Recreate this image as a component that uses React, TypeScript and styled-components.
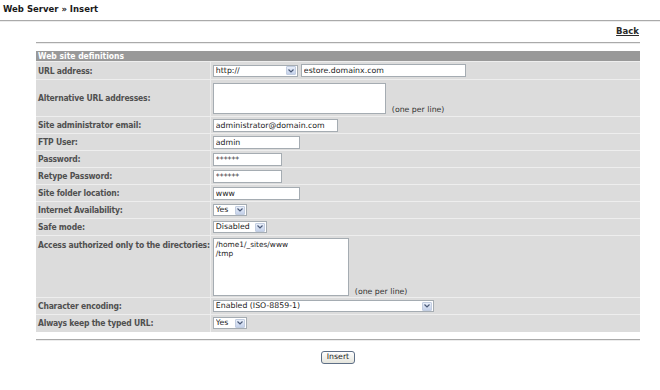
import React from 'react';
import styled, { createGlobalStyle } from 'styled-components';

const GlobalStyle = createGlobalStyle`
  body {
    margin: 0;
    background: #ffffff;
    font-family: "DejaVu Sans", Verdana, sans-serif;
    color: #222;
  }
`;

const Title = styled.h1`
  margin: 0;
  padding: 4px 0 0 3px;
  font-size: 8.5px;
  line-height: 10px;
  font-weight: bold;
  color: #1a1a1a;
`;

const Rule = styled.hr<{ $top: number }>`
  margin: ${(p) => p.$top}px 0 0 0;
  height: 0;
  border: 0;
  border-top: 1px solid #aaaaaa;
  border-bottom: 1px solid #ececec;
`;

const Content = styled.div`
  padding: 0 20px 0 36px;
`;

const BackRow = styled.div`
  margin-top: 2px;
  text-align: right;
  line-height: 10px;
  padding-right: 1px;
`;

const BackLink = styled.a`
  font-size: 8.5px;
  font-weight: bold;
  color: #2a2a2a;
  text-decoration: underline;
`;

const FormTable = styled.table`
  width: 100%;
  margin-top: 7px;
  border-collapse: collapse;
  font-family: "DejaVu Sans Condensed", "DejaVu Sans", sans-serif;
  font-stretch: condensed;
  font-size: 8.5px;
`;

const HeadCell = styled.th`
  height: 10px;
  padding: 0 0 0 2px;
  background: #999999;
  color: #ffffff;
  font-weight: bold;
  text-align: left;
  line-height: 10px;
`;

const Row = styled.tr`
  border-top: 1px solid #eeeeee;
  background: #dcdcdc;
`;

const LabelCell = styled.td<{ $h: number; $top?: boolean }>`
  width: 172px;
  height: ${(p) => p.$h}px;
  padding: ${(p) => (p.$top ? '4px 0 0 2px' : '0 0 0 2px')};
  vertical-align: ${(p) => (p.$top ? 'top' : 'middle')};
  font-weight: bold;
  color: #505050;
  letter-spacing: -0.2px;
  white-space: nowrap;
  box-sizing: border-box;
`;

const ValueCell = styled.td`
  border-left: 1px solid #eeeeee;
  padding: 0 0 0 2px;
  vertical-align: middle;
`;

const Line = styled.div<{ $pad?: string }>`
  display: flex;
  align-items: flex-end;
  gap: 6px;
  padding: ${(p) => p.$pad || '0'};
`;

const Field = styled.input<{ $w: number }>`
  width: ${(p) => p.$w}px;
  height: 13px;
  box-sizing: border-box;
  border: 1px solid #a5acb2;
  background: #ffffff;
  padding: 0 2px;
  font-family: "DejaVu Sans", Verdana, sans-serif;
  font-size: 7.8px;
  color: #222;
  outline: none;
  display: block;
`;

const Area = styled.textarea<{ $w: number; $h: number }>`
  width: ${(p) => p.$w}px;
  height: ${(p) => p.$h}px;
  box-sizing: border-box;
  border: 1px solid #a5acb2;
  background: #ffffff;
  padding: 1px 2px;
  margin: 0;
  resize: none;
  font-family: "DejaVu Sans", Verdana, sans-serif;
  font-size: 7.4px;
  line-height: 9px;
  color: #222;
  outline: none;
  display: block;
`;

const Hint = styled.span`
  font-family: "DejaVu Sans", Verdana, sans-serif;
  font-stretch: normal;
  font-size: 7.8px;
  color: #333;
  line-height: 9px;
`;

const SelectBox = styled.span<{ $w: number }>`
  display: flex;
  align-items: center;
  width: ${(p) => p.$w}px;
  height: 12px;
  box-sizing: border-box;
  border: 1px solid #a5acb2;
  background: #ffffff;
`;

const NativeSelect = styled.select`
  appearance: none;
  flex: 1;
  min-width: 0;
  height: 100%;
  border: 0;
  background: transparent;
  padding: 0 0 0 2px;
  font-family: "DejaVu Sans", Verdana, sans-serif;
  font-size: 7.8px;
  line-height: 10px;
  color: #222;
  outline: none;
`;

const ArrowButton = styled.span`
  width: 10px;
  height: 9px;
  margin-right: 1px;
  box-sizing: border-box;
  border: 1px solid #c2cde0;
  border-radius: 1px;
  background: linear-gradient(#e8eef9, #c4d1ea);
  display: flex;
  align-items: center;
  justify-content: center;
`;

const Inline = styled.div`
  display: flex;
  align-items: center;
  gap: 3px;
`;

const Footer = styled.div`
  display: flex;
  justify-content: center;
  padding-top: 10px;
`;

const SubmitButton = styled.button`
  width: 34px;
  height: 13px;
  padding: 0;
  border: 1px solid #5e6f86;
  border-radius: 3px;
  background: linear-gradient(#ffffff, #e4e4dc);
  font-family: "DejaVu Sans", Verdana, sans-serif;
  font-size: 7.8px;
  line-height: 10px;
  color: #222;
`;

const Chevron = () => (
  <svg width="6" height="4" viewBox="0 0 6 4">
    <path d="M0.5 0.5 L3 3 L5.5 0.5" fill="none" stroke="#4b5a78" strokeWidth="1.2" />
  </svg>
);

const Select = ({ w, options }: { w: number; options: string[] }) => (
  <SelectBox $w={w}>
    <NativeSelect defaultValue={options[0]}>
      {options.map((o) => (
        <option key={o}>{o}</option>
      ))}
    </NativeSelect>
    <ArrowButton>
      <Chevron />
    </ArrowButton>
  </SelectBox>
);

const App = () => {
  return (
    <>
      <GlobalStyle />
      <Title>Web Server » Insert</Title>
      <Rule $top={6} />
      <Content>
        <BackRow>
          <BackLink href="#">Back</BackLink>
        </BackRow>
        <Rule $top={6} />
        <FormTable>
          <tbody>
            <tr>
              <HeadCell colSpan={2}>Web site definitions</HeadCell>
            </tr>
            <Row>
              <LabelCell $h={18}>URL address:</LabelCell>
              <ValueCell>
                <Inline>
                  <Select w={85} options={['http://', 'https://']} />
                  <Field $w={165} defaultValue="estore.domainx.com" />
                </Inline>
              </ValueCell>
            </Row>
            <Row>
              <LabelCell $h={37}>Alternative URL addresses:</LabelCell>
              <ValueCell>
                <Line $pad="3px 0 2px 0">
                  <Area $w={173} $h={31} />
                  <Hint>(one per line)</Hint>
                </Line>
              </ValueCell>
            </Row>
            <Row>
              <LabelCell $h={17}>Site administrator email:</LabelCell>
              <ValueCell>
                <Field $w={125} defaultValue="administrator@domain.com" />
              </ValueCell>
            </Row>
            <Row>
              <LabelCell $h={17}>FTP User:</LabelCell>
              <ValueCell>
                <Field $w={87} defaultValue="admin" />
              </ValueCell>
            </Row>
            <Row>
              <LabelCell $h={17}>Password:</LabelCell>
              <ValueCell>
                <Field $w={69} defaultValue="******" />
              </ValueCell>
            </Row>
            <Row>
              <LabelCell $h={17}>Retype Password:</LabelCell>
              <ValueCell>
                <Field $w={69} defaultValue="******" />
              </ValueCell>
            </Row>
            <Row>
              <LabelCell $h={17}>Site folder location:</LabelCell>
              <ValueCell>
                <Field $w={87} defaultValue="www" />
              </ValueCell>
            </Row>
            <Row>
              <LabelCell $h={17}>Internet Availability:</LabelCell>
              <ValueCell>
                <Select w={34} options={['Yes', 'No']} />
              </ValueCell>
            </Row>
            <Row>
              <LabelCell $h={17}>Safe mode:</LabelCell>
              <ValueCell>
                <Select w={54} options={['Disabled', 'Enabled']} />
              </ValueCell>
            </Row>
            <Row>
              <LabelCell $h={62} $top>
                Access authorized only to the directories:
              </LabelCell>
              <ValueCell>
                <Line $pad="2px 0 1px 0">
                  <Area $w={136} $h={58} defaultValue={'/home1/_sites/www\n/tmp'} />
                  <Hint>(one per line)</Hint>
                </Line>
              </ValueCell>
            </Row>
            <Row>
              <LabelCell $h={17}>Character encoding:</LabelCell>
              <ValueCell>
                <Select w={221} options={['Enabled (ISO-8859-1)', 'Enabled (UTF-8)', 'Disabled']} />
              </ValueCell>
            </Row>
            <Row>
              <LabelCell $h={17}>Always keep the typed URL:</LabelCell>
              <ValueCell>
                <Select w={34} options={['Yes', 'No']} />
              </ValueCell>
            </Row>
          </tbody>
        </FormTable>
        <Rule $top={7} />
        <Footer>
          <SubmitButton>Insert</SubmitButton>
        </Footer>
      </Content>
    </>
  );
};

export default App;
